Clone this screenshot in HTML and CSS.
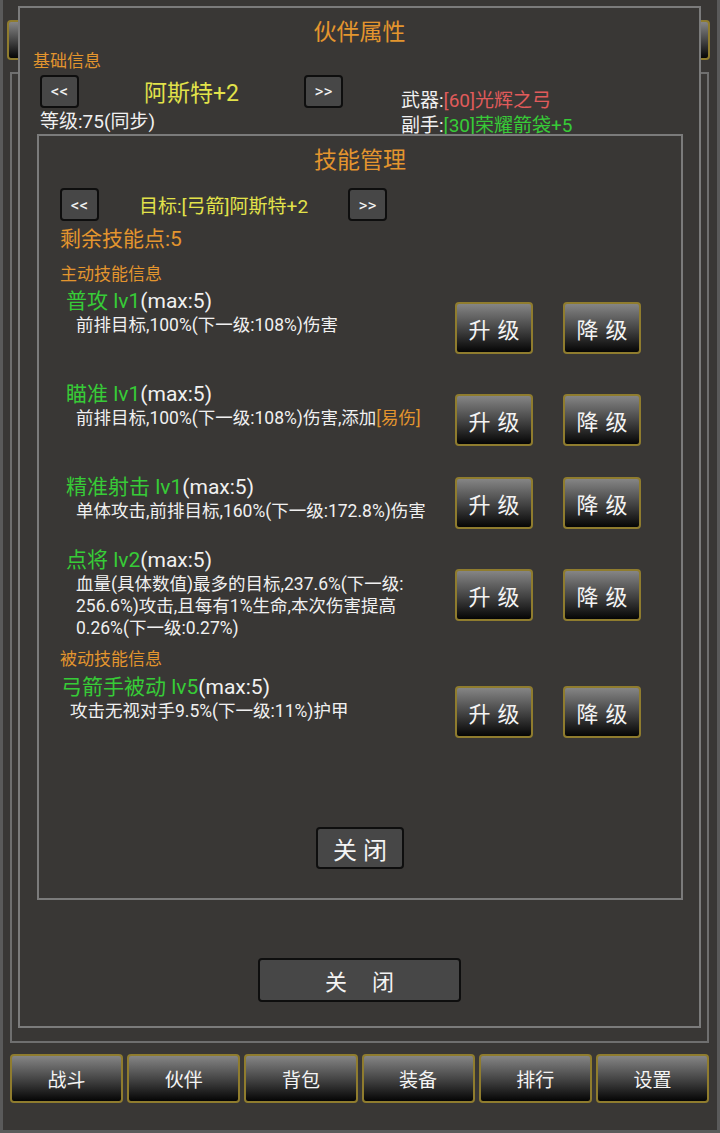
FILE: index.html
```html
<!DOCTYPE html>
<html lang="zh-CN">
<head>
  <meta charset="UTF-8" />
  <title>伙伴属性</title>
  <meta name="viewport" content="width=device-width, initial-scale=1.0" />
  <link rel="stylesheet" href="styles.css">
</head>
<body>

<div class="screen">
  <div class="topbar">
    <div class="gold-btn top-btn"></div>
    <div class="gold-btn top-btn"></div>
  </div>

  <div class="main-panel"></div>

  <div class="nav">
    <div class="gold-btn nav-btn">战斗</div>
    <div class="gold-btn nav-btn">伙伴</div>
    <div class="gold-btn nav-btn">背包</div>
    <div class="gold-btn nav-btn">装备</div>
    <div class="gold-btn nav-btn">排行</div>
    <div class="gold-btn nav-btn">设置</div>
  </div>

  <!-- 伙伴属性 -->
  <div class="dialog partner">
    <div class="dlg-title">伙伴属性</div>
    <div class="sec-label base-label">基础信息</div>
    <div class="base-info">
      <div class="base-left">
        <div class="switcher hero-switch">
          <div class="arrow">&lt;&lt;</div>
          <div class="hero-name">阿斯特+2</div>
          <div class="arrow">&gt;&gt;</div>
        </div>
        <div class="level">等级:75(同步)</div>
      </div>
      <div class="equip">
        <div>武器:<span class="red">[60]光辉之弓</span></div>
        <div>副手:<span class="green">[30]荣耀箭袋+5</span></div>
      </div>
    </div>
    <div class="dark-btn close-wide">关闭</div>

    <!-- 技能管理 -->
    <div class="dialog skills">
      <div class="dlg-title">技能管理</div>
      <div class="switcher target-switch">
        <div class="arrow">&lt;&lt;</div>
        <div class="target">目标:[弓箭]阿斯特+2</div>
        <div class="arrow">&gt;&gt;</div>
      </div>
      <div class="points">剩余技能点:5</div>
      <div class="sec-label active-label">主动技能信息</div>

      <div class="skill r1">
        <div class="skill-info">
          <div class="skill-name"><span class="green">普攻 lv1</span>(max:5)</div>
          <div class="skill-desc">前排目标,100%(下一级:108%)伤害</div>
        </div>
        <div class="skill-btns">
          <div class="gold-btn lv-btn">升级</div>
          <div class="gold-btn lv-btn">降级</div>
        </div>
      </div>

      <div class="skill r2">
        <div class="skill-info">
          <div class="skill-name"><span class="green">瞄准 lv1</span>(max:5)</div>
          <div class="skill-desc">前排目标,100%(下一级:108%)伤害,添加<span class="orange">[易伤]</span></div>
        </div>
        <div class="skill-btns">
          <div class="gold-btn lv-btn">升级</div>
          <div class="gold-btn lv-btn">降级</div>
        </div>
      </div>

      <div class="skill r3">
        <div class="skill-info">
          <div class="skill-name"><span class="green">精准射击 lv1</span>(max:5)</div>
          <div class="skill-desc">单体攻击,前排目标,160%(下一级:172.8%)伤害</div>
        </div>
        <div class="skill-btns">
          <div class="gold-btn lv-btn">升级</div>
          <div class="gold-btn lv-btn">降级</div>
        </div>
      </div>

      <div class="skill r4">
        <div class="skill-info">
          <div class="skill-name"><span class="green">点将 lv2</span>(max:5)</div>
          <div class="skill-desc">血量(具体数值)最多的目标,237.6%(下一级:<br>256.6%)攻击,且每有1%生命,本次伤害提高<br>0.26%(下一级:0.27%)</div>
        </div>
        <div class="skill-btns">
          <div class="gold-btn lv-btn">升级</div>
          <div class="gold-btn lv-btn">降级</div>
        </div>
      </div>

      <div class="sec-label passive-label">被动技能信息</div>

      <div class="skill passive r5">
        <div class="skill-info">
          <div class="skill-name"><span class="green">弓箭手被动 lv5</span>(max:5)</div>
          <div class="skill-desc">攻击无视对手9.5%(下一级:11%)护甲</div>
        </div>
        <div class="skill-btns">
          <div class="gold-btn lv-btn">升级</div>
          <div class="gold-btn lv-btn">降级</div>
        </div>
      </div>

      <div class="dark-btn close-small">关闭</div>
    </div>
  </div>
</div>

</body>
</html>
```

FILE: styles.css
```css
* {
  box-sizing: border-box;
}

body {
  margin: 0;
  background: #393735;
  font-family: Roboto, "Noto Sans CJK SC", sans-serif;
  color: #f0f0f0;
}

.screen {
  position: relative;
  width: 720px;
  height: 1133px;
  padding: 20px 4px 0 4px;
  border: 3px solid #5a5a5a;
  border-top: 0;
  overflow: hidden;
}

/* 金色按钮 */
.gold-btn {
  display: flex;
  align-items: center;
  justify-content: center;
  border: 2px solid #8f7c2e;
  border-radius: 4px;
  background: linear-gradient(#858585, #404040 55%, #050505);
  color: #f4f4f4;
}

.topbar {
  display: flex;
  justify-content: space-between;
  height: 40px;
  margin-right: 3px;
}

.top-btn {
  width: 110px;
}

.main-panel {
  margin: 12px 4px 0 3px;
  height: 971px;
  border: 2px solid #6f6f6f;
}

.nav {
  display: flex;
  gap: 4px;
  height: 49px;
  margin: 11px 4px 0 3px;
}

.nav-btn {
  flex: 1;
  font-size: 19px;
}

/* 弹窗 */
.dialog {
  position: absolute;
  background: #393735;
  border: 2px solid #7b7b7b;
}

.partner {
  left: 15px;
  top: 6px;
  width: 683px;
  height: 1022px;
  display: flex;
  flex-direction: column;
  padding: 10px 0 24px 0;
}

.dlg-title {
  text-align: center;
  font-size: 23px;
  line-height: 30px;
  color: #e3952e;
}

.sec-label {
  font-size: 17px;
  line-height: 20px;
  color: #e3952e;
}

.orange {
  color: #e3952e;
}

.green {
  color: #37cb37;
}

.red {
  color: #e05b5b;
}

.base-label {
  margin-top: 3px;
  padding-left: 13px;
}

.base-info {
  display: flex;
  margin-top: 3px;
  padding-left: 20px;
}

.switcher {
  display: grid;
  align-items: center;
  height: 33px;
}

.hero-switch {
  grid-template-columns: 39px 225px 39px;
}

.arrow {
  height: 33px;
  display: flex;
  align-items: center;
  justify-content: center;
  background: #474747;
  border: 2px solid #0e0e0e;
  border-radius: 4px;
  font-size: 17px;
  color: #f2f2f2;
}

.hero-name {
  text-align: center;
  font-size: 23px;
  color: #e2e24a;
}

.level {
  margin-top: 4px;
  font-size: 19px;
  line-height: 22px;
}

.equip {
  margin-left: 58px;
  padding-top: 14px;
  font-size: 19px;
  line-height: 25px;
}

.dark-btn {
  display: flex;
  align-items: center;
  justify-content: center;
  align-self: center;
  background: #474747;
  border: 2px solid #0e0e0e;
  border-radius: 4px;
  color: #f4f4f4;
}

.close-wide {
  margin-top: auto;
  width: 203px;
  height: 44px;
  font-size: 22px;
  letter-spacing: 25px;
  padding-left: 25px;
}

/* 技能管理 */
.skills {
  left: 17px;
  top: 126px;
  width: 646px;
  height: 766px;
  display: flex;
  flex-direction: column;
  padding: 10px 21px 29px 21px;
}

.target-switch {
  margin-top: 12px;
  grid-template-columns: 39px 249px 39px;
}

.target {
  text-align: center;
  font-size: 19px;
  color: #e2e24a;
}

.points {
  margin-top: 6px;
  font-size: 21px;
  line-height: 24px;
  color: #e3952e;
}

.active-label {
  margin-top: 13px;
}

.skill {
  display: flex;
  padding-left: 6px;
}

.skill-info {
  flex: 1;
}

.skill-name {
  font-size: 21px;
  line-height: 24px;
}

.skill-desc {
  margin-top: 1px;
  padding-left: 10px;
  font-size: 17.5px;
  line-height: 22px;
}

.skill-btns {
  display: flex;
  gap: 30px;
  margin-right: 19px;
}

.lv-btn {
  width: 78px;
  height: 52px;
  font-size: 22px;
  letter-spacing: 7px;
  padding-left: 7px;
}

.r1 {
  margin-top: 5px;
  height: 93px;
}

.r1 .skill-btns {
  padding-top: 13px;
}

.r2 {
  height: 93px;
}

.r2 .skill-btns {
  padding-top: 12px;
}

.r3 {
  height: 73px;
}

.r3 .skill-btns {
  padding-top: 2px;
}

.r4 .skill-btns {
  padding-top: 21px;
}

.passive-label {
  margin-top: 10px;
}

.passive {
  margin-top: 6px;
  padding-left: 1px;
}

.passive .skill-desc {
  padding-left: 9px;
}

.r5 .skill-btns {
  padding-top: 11px;
}

.close-small {
  margin-top: auto;
  width: 88px;
  height: 42px;
  font-size: 24px;
  letter-spacing: 6px;
  padding-left: 6px;
}
```
